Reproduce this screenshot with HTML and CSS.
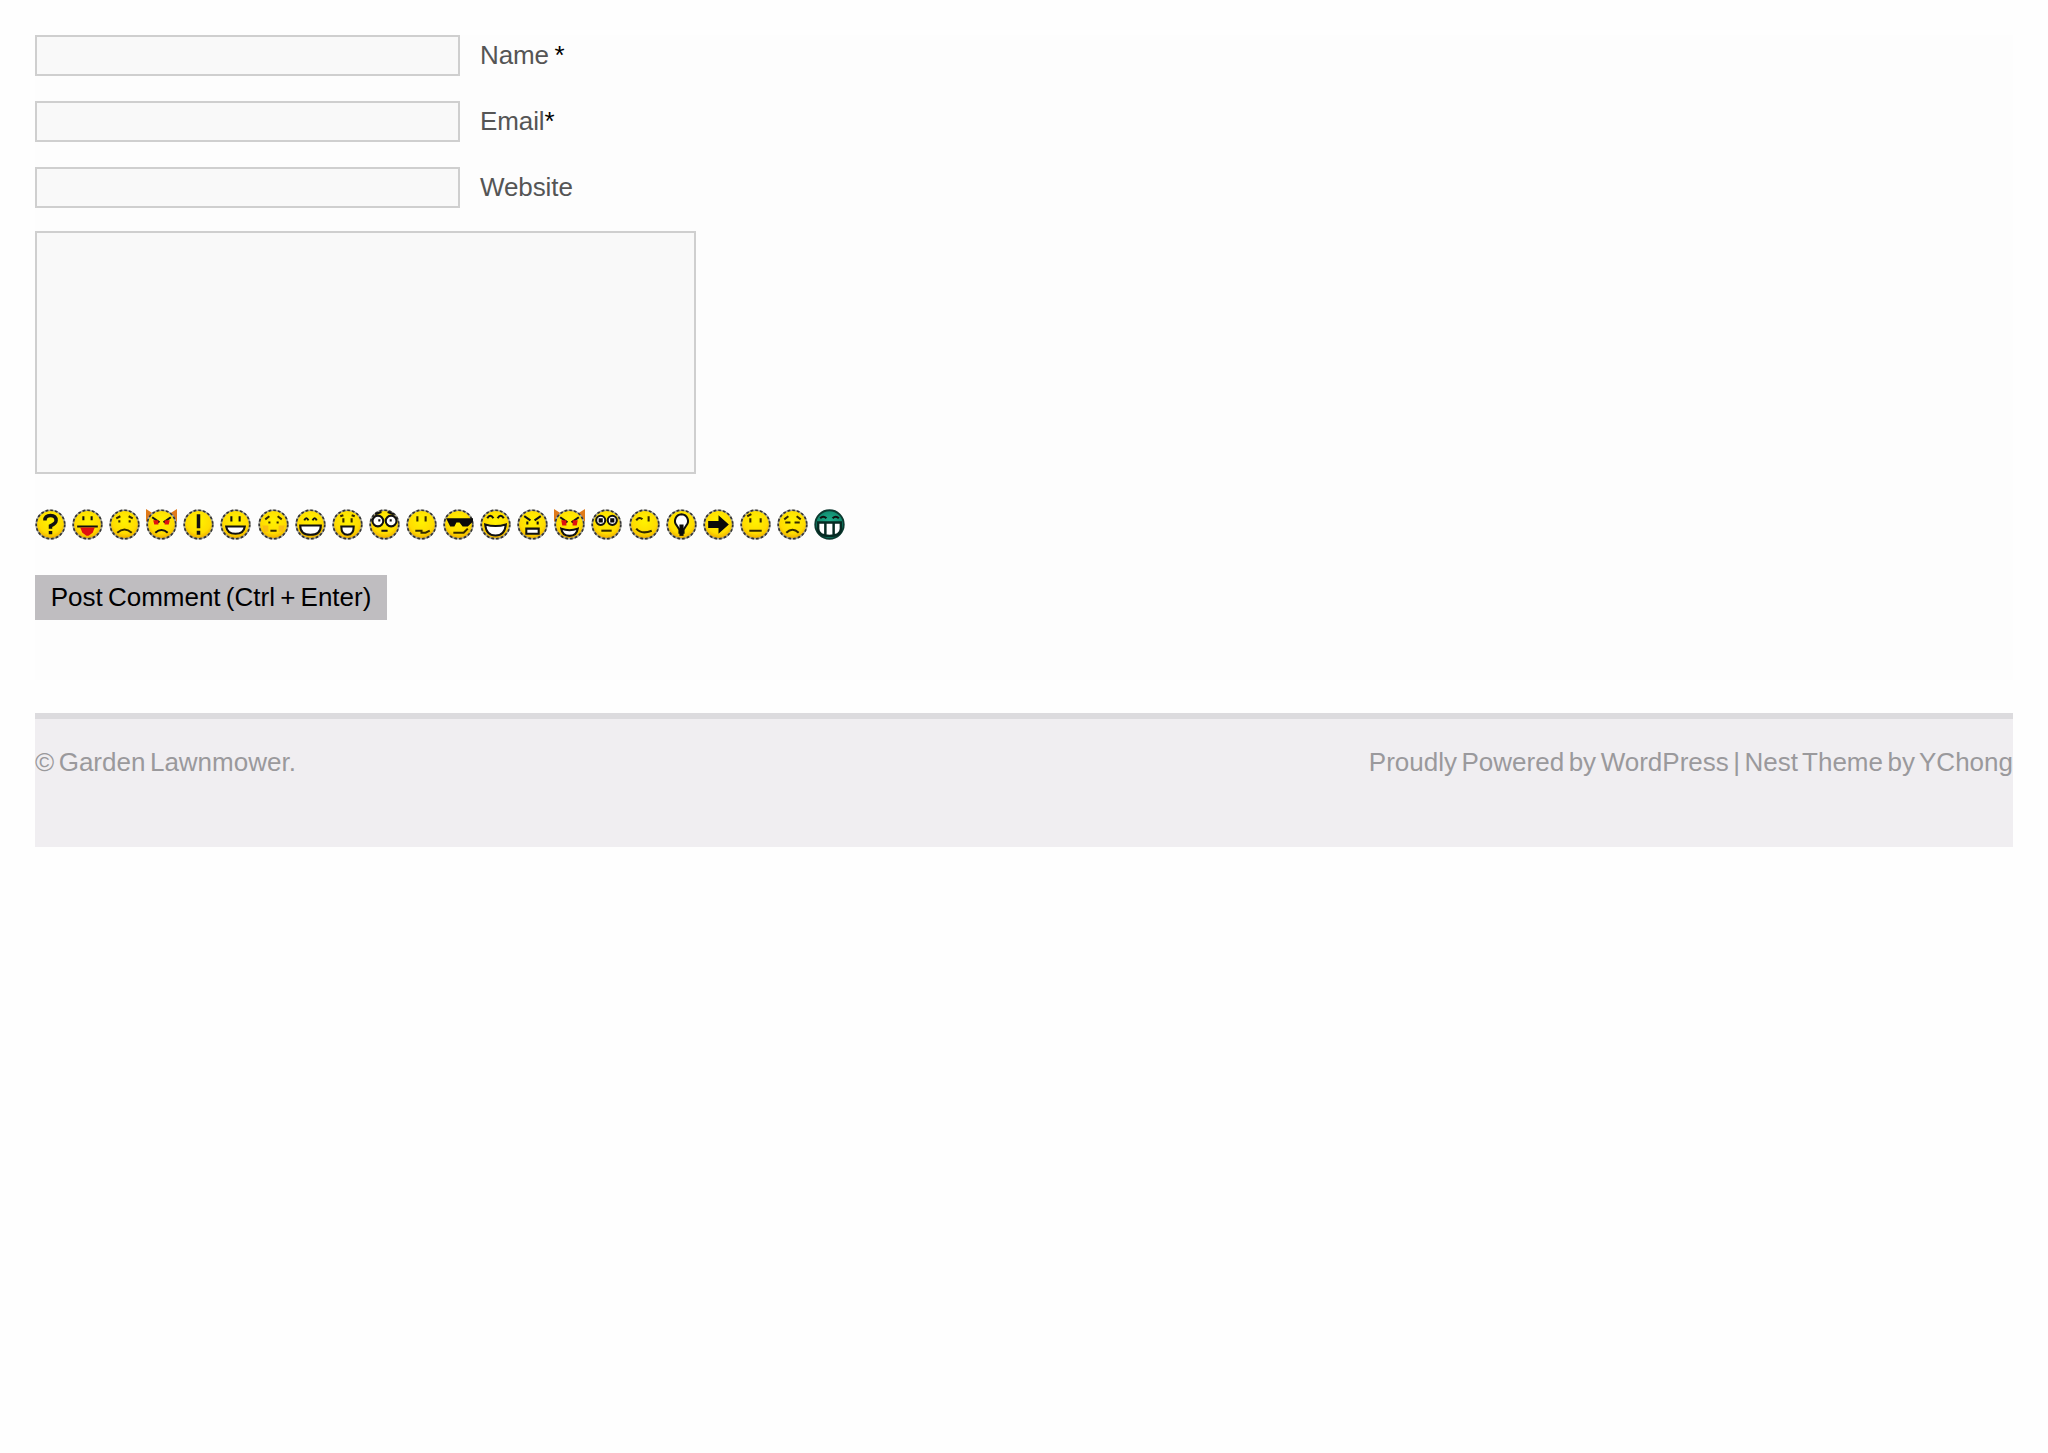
FILE: index.html
```html
<!DOCTYPE html>
<html lang="en">
<head>
<meta charset="utf-8">
<title>Garden Lawnmower</title>
<link rel="stylesheet" href="styles.css">
</head>
<body>
<div class="page">
  <section class="comment">
    <form class="comment-form">
      <div class="field"><input class="text-input" type="text" id="name"><label class="field-label" for="name">Name <b class="req">*</b></label></div>
      <div class="field"><input class="text-input" type="text" id="email"><label class="field-label" for="email">Email<b class="req">*</b></label></div>
      <div class="field"><input class="text-input" type="text" id="site"><label class="field-label" for="site">Website</label></div>
      <textarea class="message"></textarea>
      <div class="smileys">
        <svg class="smiley" viewBox="0 0 15 15">
          <defs>
            <radialGradient id="yel" cx="50%" cy="38%" r="62%"><stop offset="0" stop-color="#fff200"/><stop offset=".7" stop-color="#ffdc00"/><stop offset="1" stop-color="#eba800"/></radialGradient>
            <radialGradient id="grn" cx="50%" cy="40%" r="60%"><stop offset="0" stop-color="#1fae8c"/><stop offset="1" stop-color="#0a7a60"/></radialGradient>
            <g id="face"><circle cx="7.5" cy="7.5" r="6.9" fill="url(#yel)" stroke="#a8a89c" stroke-width=".8"/><circle cx="7.5" cy="7.5" r="6.9" fill="none" stroke="#333" stroke-width=".8" stroke-dasharray="1.3 1"/></g>
            <g id="facegreen"><circle cx="7.5" cy="7.5" r="6.9" fill="url(#grn)" stroke="#0c3a30" stroke-width=".9"/></g>
          </defs>
          <use href="#face"/><path class="ink thick" d="M4.800 5.600Q4.800 3.200 7.500 3.200T10.200 5.600Q10.200 7 7.500 8.200V9.600M7.500 10.600V12.200"/>
        </svg>
        <svg class="smiley" viewBox="0 0 15 15"><use href="#face"/><path class="ink" d="M5.500 3.500v2M9.500 3.500v2M2.500 8.500h10"/><path class="red" d="M4 9h7l-1 2.500-2 1.500H7L5 11.500z"/></svg>
        <svg class="smiley" viewBox="0 0 15 15"><use href="#face"/><path class="ink soft" d="M3.500 4.500l2-1M11.500 4.500l-2-1M5 5.500v1M10 5.500v1M4 11.500Q7.500 8.300 11 11.500"/></svg>
        <svg class="smiley" viewBox="0 0 15 15"><path class="horn" d="M0 0l4 2.500H11L15 0V6H0z"/><use href="#face"/><path class="ink" d="M3 4l3.500 2.500M12 4L8.500 6.500M4.500 11.500Q7.500 8.800 10.500 11.500"/><path class="red" d="M3.500 5.500h2.500v2h-2zM9 5.500h2.500l-.5 2H9z"/></svg>
        <svg class="smiley" viewBox="0 0 15 15"><use href="#face"/><path class="ink thick" d="M7.500 2.500v6.800M7.500 10.500v2"/></svg>
        <svg class="smiley" viewBox="0 0 15 15"><use href="#face"/><path class="ink" d="M5.500 3.500v2.500M9.500 3.500v2.500"/><path class="white line" d="M3 8.500h9q-.5 3.500-4.500 3.500T3 8.500z"/></svg>
        <svg class="smiley" viewBox="0 0 15 15"><use href="#face"/><path class="blush" d="M2 8h3v3H3zM10 8h3l-1 3h-2z"/><path class="ink soft" d="M3.500 5l2-1.500M11.500 5l-2-1.500M5.500 6v1M9.500 6v1M6 10.500h3"/></svg>
        <svg class="smiley" viewBox="0 0 15 15"><use href="#face"/><path class="ink" d="M4.500 5.500Q5.500 3.500 6.500 5.500M8.500 5.500Q9.500 3.500 10.500 5.500"/><path class="white line" d="M2.500 8h10q0 4.500-5 4.500T2.500 8z"/></svg>
        <svg class="smiley" viewBox="0 0 15 15"><use href="#face"/><path class="ink soft" d="M4 3.500l1.500-.5M11 3.500L9.500 3M5.500 4.500v2M9.500 4.500v2"/><path class="white line" d="M4.500 8.500h6q0 4-3 4t-3-4z"/></svg>
        <svg class="smiley" viewBox="0 0 15 15"><use href="#face"/><path class="ink" d="M3 2.500L6 1.500M9 1.500l3 1M6 10.500h3"/><circle class="white line" cx="4.300" cy="5.800" r="2.600"/><circle class="white line" cx="10.700" cy="5.800" r="2.600"/><path class="ink" d="M4.500 5.500h1M10 5.500h1"/></svg>
        <svg class="smiley" viewBox="0 0 15 15"><use href="#face"/><path class="ink soft" d="M5.500 3.500v2.500M9.500 3.500v2.500M4.500 10.500h3v1h2l2-1"/></svg>
        <svg class="smiley" viewBox="0 0 15 15"><use href="#face"/><path class="solid" d="M1.500 4.500h13v1.500l-2.500 2.500H9.500L8 6.500H6.500L5.500 8.500H3.500z"/><path class="ink soft" d="M5 11.500h5l2-2"/></svg>
        <svg class="smiley" viewBox="0 0 15 15"><use href="#face"/><path class="ink" d="M3.500 4.500Q5 2 6.500 4.500M8.500 4.500Q10 2 11.500 4.500"/><path class="white line" d="M2.500 7.500Q7.500 9 12.500 7.500Q12 12.800 7.500 12.800T2.500 7.500z"/></svg>
        <svg class="smiley" viewBox="0 0 15 15"><use href="#face"/><path class="ink" d="M3.500 3.500L6.500 5.500M11.500 3.500L8.500 5.500M5 6v1.500M10 6v1.500"/><path class="white line" d="M4.500 9.500h6v2.500h-6z"/></svg>
        <svg class="smiley" viewBox="0 0 15 15"><path class="horn" d="M0 0l4 2.500H11L15 0V6H0z"/><use href="#face"/><path class="ink" d="M3 4l3.500 2.500M12 4L8.500 6.500"/><path class="red" d="M3.500 5.500h2.500v2.500h-2zM9 5.500h2.500l-.5 2.500H9z"/><path class="white line" d="M3.500 9.500Q7.500 11 11.500 9.500Q11 13 7.500 13T3.500 9.500z"/></svg>
        <svg class="smiley" viewBox="0 0 15 15"><use href="#face"/><circle class="white line" cx="4.700" cy="5.500" r="2.200"/><circle class="white line" cx="10.300" cy="5.500" r="2.200"/><path class="solid" d="M3.700 4.500h2v2h-2zM9.300 4.500h2v2h-2z"/><path class="ink soft" d="M5 10.500h5"/></svg>
        <svg class="smiley" viewBox="0 0 15 15"><use href="#face"/><path class="ink soft" d="M3.500 5.500Q5 3.500 6.500 5M9.500 3.500v2.500M3.500 9.500Q6 12.500 11 10.500"/></svg>
        <svg class="smiley" viewBox="0 0 15 15"><use href="#face"/><path class="white line" d="M7.500 2.500a3.300 3.300 0 0 1 2.300 5.500L8.500 10v1.500h-2V10L5.200 8a3.300 3.300 0 0 1 2.300-5.500z"/><path class="solid" d="M6.500 7.500h2v5.500h-2z"/></svg>
        <svg class="smiley" viewBox="0 0 15 15"><use href="#face"/><path class="solid" d="M2.500 5.800H7.500V3l5 4.500-5 4.500V9.200H2.500z"/></svg>
        <svg class="smiley" viewBox="0 0 15 15"><use href="#face"/><path class="ink soft" d="M3.500 3.500l2-1M5 4.500v2M10 4.500v2M4.500 10.500h6"/></svg>
        <svg class="smiley" viewBox="0 0 15 15"><use href="#face"/><path class="ink soft" d="M3.500 5l2-1.500M11.500 5l-2-1.500M4 6.500h2.500M8.500 6.500h2.500M4.500 11.500Q7.500 8.500 10.500 11.500"/></svg>
        <svg class="smiley" viewBox="0 0 15 15"><use href="#facegreen"/><path class="ink" d="M3 4.500Q4.500 3 6 4.500M9 4.500Q10.500 3 12 4.500"/><path class="white heavy" d="M2 6.500h11v3q0 3.500-5.500 3.500T2 9.500zM5.500 6.500v6M9.500 6.500v6"/></svg>
      </div>
      <button class="submit" type="button">Post Comment (Ctrl + Enter)</button>
    </form>
  </section>
  <footer class="site-footer">
    <span>© Garden Lawnmower.</span>
    <span>Proudly Powered by WordPress | Nest Theme by YChong</span>
  </footer>
</div>
</body>
</html>
```
FILE: styles.css
```css
* { box-sizing: border-box; }
html, body { margin: 0; }
body {
  background: #fefefe;
  font-family: "Liberation Sans", Arial, sans-serif;
  min-height: 1453px;
}
.page { padding: 35px 35px 0; }
.comment { background: #fdfdfd; padding-bottom: 60px; margin-bottom: 33px; }
.field { display: flex; align-items: center; gap: 20px; margin-bottom: 25px; height: 41px; }
.text-input {
  width: 425px; height: 41px;
  border: 2px solid #cfcfcf;
  background: #f9f9f9;
  padding: 0; margin: 0; border-radius: 0; outline: none;
}
.field-label { font-size: 26px; letter-spacing: -.1px; word-spacing: -1.5px; color: #555; }
.req { font-weight: normal; color: #000; }
.message {
  display: block; width: 661px; height: 243px;
  margin: -2px 0 35px;
  border: 2px solid #cfcfcf;
  background: #f9f9f9;
  padding: 0; resize: none; border-radius: 0; outline: none;
}
.smileys { display: flex; gap: 6.1px; height: 31px; margin-bottom: 35px; }
.smiley { width: 31px; height: 31px; flex: none; display: block; filter: blur(.3px); }
.ink { fill: none; stroke: #111; stroke-width: 1; }
.ink.soft { stroke: #332a00; }
.ink.thick { stroke-width: 1.7; }
.red { fill: #e01010; }
.horn { fill: #e07a1a; }
.solid { fill: #0a0a0a; }
.blush { fill: #f5a623; opacity: .55; }
.white { fill: #fff; }
.line { stroke: #111; stroke-width: 1; }
.heavy { stroke: #062a22; stroke-width: 1.2; }
.submit {
  display: block; width: 352px; height: 45px;
  border: 0; border-radius: 0; margin: 0; padding: 0;
  background: #bfbdc0; color: #000;
  font: 26px "Liberation Sans", Arial, sans-serif;
  word-spacing: -2px;
}
.site-footer {
  display: flex; justify-content: space-between;
  height: 134px; padding-top: 27px;
  border-top: 6px solid #dcdbde;
  background: #f0eef1;
  color: #9a999c;
  font-size: 26px; line-height: 32px; word-spacing: -2.7px;
}
```
